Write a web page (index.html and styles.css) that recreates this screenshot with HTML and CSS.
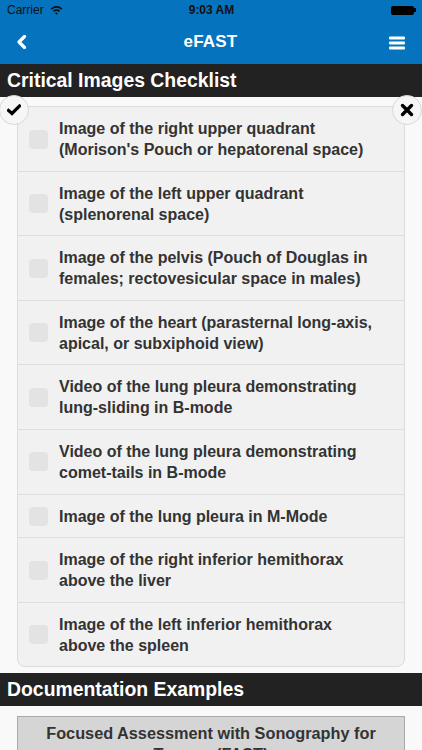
FILE: index.html
```html
<!DOCTYPE html>
<html>
<head>
<meta charset="utf-8">
<link rel="stylesheet" href="styles.css">
</head>
<body>
<div class="top">
  <div class="status">
    <div class="carrier">Carrier
      <svg class="wifi" width="13" height="10" viewBox="0 0 13 10"><path d="M0.6 3.4 A8.5 8.5 0 0 1 12.4 3.4 L11.2 4.7 A6.7 6.7 0 0 0 1.8 4.7 Z" fill="#111"/><path d="M2.9 5.8 A5.2 5.2 0 0 1 10.1 5.8 L8.9 7.1 A3.4 3.4 0 0 0 4.1 7.1 Z" fill="#111"/><path d="M5.1 8.2 A2 2 0 0 1 7.9 8.2 L6.5 9.7 Z" fill="#111"/></svg>
    </div>
    <div class="time">9:03 AM</div>
    <div class="battery"><span class="batt-body"></span><span class="batt-tip"></span></div>
  </div>
  <div class="nav">
    <svg class="back" width="12" height="14" viewBox="0 0 12 14"><path d="M8.5 1.5 L3 7 L8.5 12.5" fill="none" stroke="#fff" stroke-width="3.2" stroke-linecap="round" stroke-linejoin="round"/></svg>
    <div class="title">eFAST</div>
    <svg class="menu" width="16" height="14" viewBox="0 0 16 14"><rect x="0" y="0.5" width="16" height="3" rx="1" fill="#fff"/><rect x="0" y="5.5" width="16" height="3" rx="1" fill="#fff"/><rect x="0" y="10.5" width="16" height="3" rx="1" fill="#fff"/></svg>
  </div>
</div>

<div class="section-head">Critical Images Checklist</div>

<div class="content">
  <div class="card-wrap">
    <div class="badge badge-check">
      <svg width="14" height="12" viewBox="0 0 14 12"><path d="M1.5 6.5 L5 9.5 L12.5 2" fill="none" stroke="#000" stroke-width="3.2" stroke-linecap="square"/></svg>
    </div>
    <div class="badge badge-close">
      <svg width="14" height="14" viewBox="0 0 14 14"><path d="M2.5 2.5 L11.5 11.5 M11.5 2.5 L2.5 11.5" fill="none" stroke="#000" stroke-width="3.4" stroke-linecap="round"/></svg>
    </div>
    <ul class="checklist">
      <li class="row"><span class="box"></span><span class="label">Image of the right upper quadrant (Morison's Pouch or hepatorenal space)</span></li>
      <li class="row"><span class="box"></span><span class="label">Image of the left upper quadrant (splenorenal space)</span></li>
      <li class="row"><span class="box"></span><span class="label">Image of the pelvis (Pouch of Douglas in females; rectovesicular space in males)</span></li>
      <li class="row"><span class="box"></span><span class="label">Image of the heart (parasternal long-axis, apical, or subxiphoid view)</span></li>
      <li class="row"><span class="box"></span><span class="label">Video of the lung pleura demonstrating lung-sliding in B-mode</span></li>
      <li class="row"><span class="box"></span><span class="label">Video of the lung pleura demonstrating comet-tails in B-mode</span></li>
      <li class="row"><span class="box"></span><span class="label">Image of the lung pleura in M-Mode</span></li>
      <li class="row"><span class="box"></span><span class="label">Image of the right inferior hemithorax above the liver</span></li>
      <li class="row"><span class="box"></span><span class="label">Image of the left inferior hemithorax above the spleen</span></li>
    </ul>
  </div>
</div>

<div class="section-head doc-head">Documentation Examples</div>

<div class="content doc-content">
  <div class="doc-card">Focused Assessment with Sonography for Trauma (FAST)</div>
</div>
</body>
</html>
```
FILE: styles.css
```css
* { box-sizing: border-box; }
html, body {
  margin: 0;
  padding: 0;
  width: 422px;
  height: 750px;
  overflow: hidden;
  background: #f9f9f9;
  font-family: "Liberation Sans", Arial, sans-serif;
}
.top { background: #0573bd; }
.status {
  height: 20px;
  display: flex;
  align-items: center;
  justify-content: space-between;
  padding: 0 6px 0 7px;
  font-size: 12px;
  color: #111;
}
.carrier { display: flex; align-items: center; gap: 6px; width: 120px; }
.wifi { margin-top: -1px; }
.time { font-weight: bold; font-size: 12px; }
.battery { width: 120px; display: flex; justify-content: flex-end; align-items: center; }
.batt-body { width: 23px; height: 9px; background: #000; border-radius: 2px; }
.batt-tip { width: 1.5px; height: 4px; background: #000; }
.nav {
  height: 44px;
  display: flex;
  align-items: center;
  justify-content: space-between;
  padding: 0 17px 0 16px;
}
.title {
  color: #fff;
  font-weight: bold;
  font-size: 17px;
  letter-spacing: 0.2px;
  margin-left: 4px;
}
.menu { margin-top: 1px; }
.section-head {
  background: #222;
  color: #fff;
  font-weight: bold;
  font-size: 19.4px;
  height: 33px;
  line-height: 33px;
  padding-left: 7px;
}
.content { padding: 9px 17px 6px 17px; }
.card-wrap { position: relative; }
.checklist {
  list-style: none;
  margin: 0;
  padding: 0;
  background: #f1f1f1;
  border: 1px solid #dcdcdc;
  border-radius: 8px;
}
.row {
  display: flex;
  align-items: center;
  padding: 11px 30px 10.6px 11px;
  border-top: 1px solid #dedede;
}
.row:first-child { border-top: none; }
.box {
  flex: none;
  width: 19px;
  height: 19px;
  border-radius: 4px;
  background: #e3e3e3;
  margin-right: 11px;
}
.label {
  flex: 1;
  font-weight: bold;
  font-size: 16px;
  line-height: 21px;
  color: #333;
}
.badge {
  position: absolute;
  top: -11px;
  width: 30px;
  height: 30px;
  border-radius: 50%;
  background: #f6f6f6;
  border: 1px solid #d8d8d8;
  display: flex;
  align-items: center;
  justify-content: center;
  z-index: 2;
}
.badge-check { left: -18px; }
.badge-close { right: -17px; }
.doc-content { padding-top: 10px; }
.doc-card {
  background: #d5d5d5;
  border: 1px solid #a9a9a9;
  text-align: center;
  font-weight: bold;
  font-size: 16.3px;
  line-height: 21px;
  color: #333;
  padding: 6px 20px;
}
```
